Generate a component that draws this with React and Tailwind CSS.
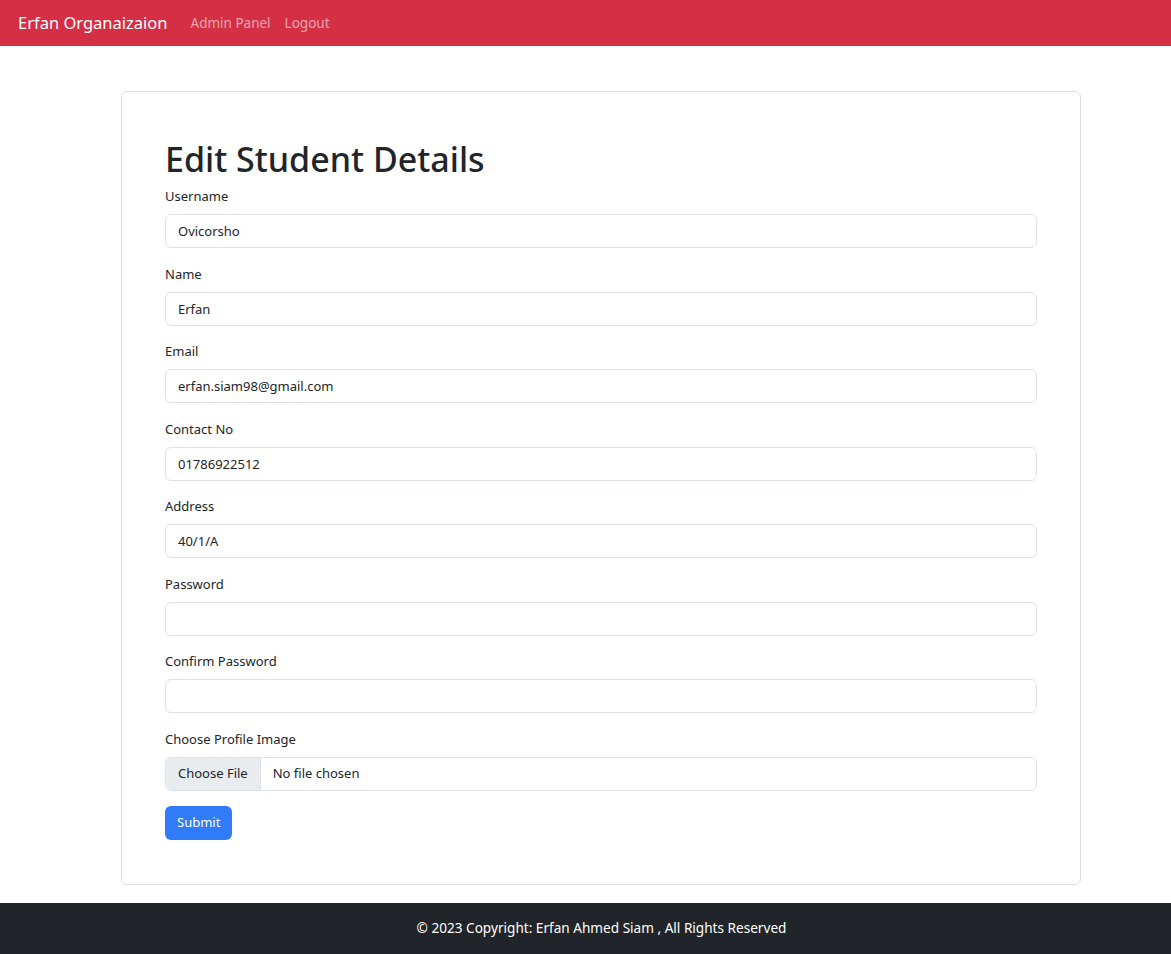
import React from 'react';

const fields = [
  { label: 'Username', value: 'Ovicorsho' },
  { label: 'Name', value: 'Erfan' },
  { label: 'Email', value: 'erfan.siam98@gmail.com' },
  { label: 'Contact No', value: '01786922512' },
  { label: 'Address', value: '40/1/A' },
  { label: 'Password', value: '', type: 'password' },
  { label: 'Confirm Password', value: '', type: 'password' },
];

export default function App() {
  return (
    <div className="min-h-[954px] bg-white text-[#212529] flex flex-col" style={{ fontFamily: '"Noto Sans", "Open Sans", Arial, sans-serif' }}>
      <nav className="h-[46px] bg-[#d42f45] flex items-center px-[18px]">
        <a className="text-white text-[16.5px] mr-[15px]">Erfan Organaizaion</a>
        <a className="text-white/55 text-[13.5px] px-2">Admin Panel</a>
        <a className="text-white/55 text-[13.5px] px-[6px]">Logout</a>
      </nav>

      <main className="flex-1">
        <div className="w-[960px] ml-[121px] mt-[45px] mb-[18px] border border-[#dcdde0] rounded-[6px] px-[43px] pt-[44px] pb-[44px]">
          <h1 className="text-[34px] leading-[47px] font-medium mb-[3px]">Edit Student Details</h1>
          {fields.map(f => (
            <div key={f.label} className="mb-[15.5px]">
              <label className="block text-[13px] leading-[21px] mb-[7px]">{f.label}</label>
              <input
                type={f.type || 'text'}
                defaultValue={f.value}
                className="w-full h-[34px] px-3 text-[13px] border border-[#dee2e6] rounded-[6px] outline-none bg-white"
              />
            </div>
          ))}
          <div className="mb-[15px]">
            <label className="block text-[13px] leading-[21px] mb-[7px]">Choose Profile Image</label>
            <div className="w-full h-[34px] flex items-center border border-[#dee2e6] rounded-[6px] overflow-hidden text-[13px]">
              <span className="h-full flex items-center px-3 bg-[#e9ecef] border-r border-[#dee2e6]">Choose File</span>
              <span className="pl-3">No file chosen</span>
            </div>
          </div>
          <button className="h-[34px] px-3 bg-[#2f7bf8] text-white text-[13px] rounded-[6px]">Submit</button>
        </div>
      </main>

      <footer className="h-[52px] bg-[#212529] flex items-center justify-center pl-[32px] text-white text-[13.6px]">
        © 2023 Copyright: Erfan Ahmed Siam , All Rights Reserved
      </footer>
    </div>
  );
}
